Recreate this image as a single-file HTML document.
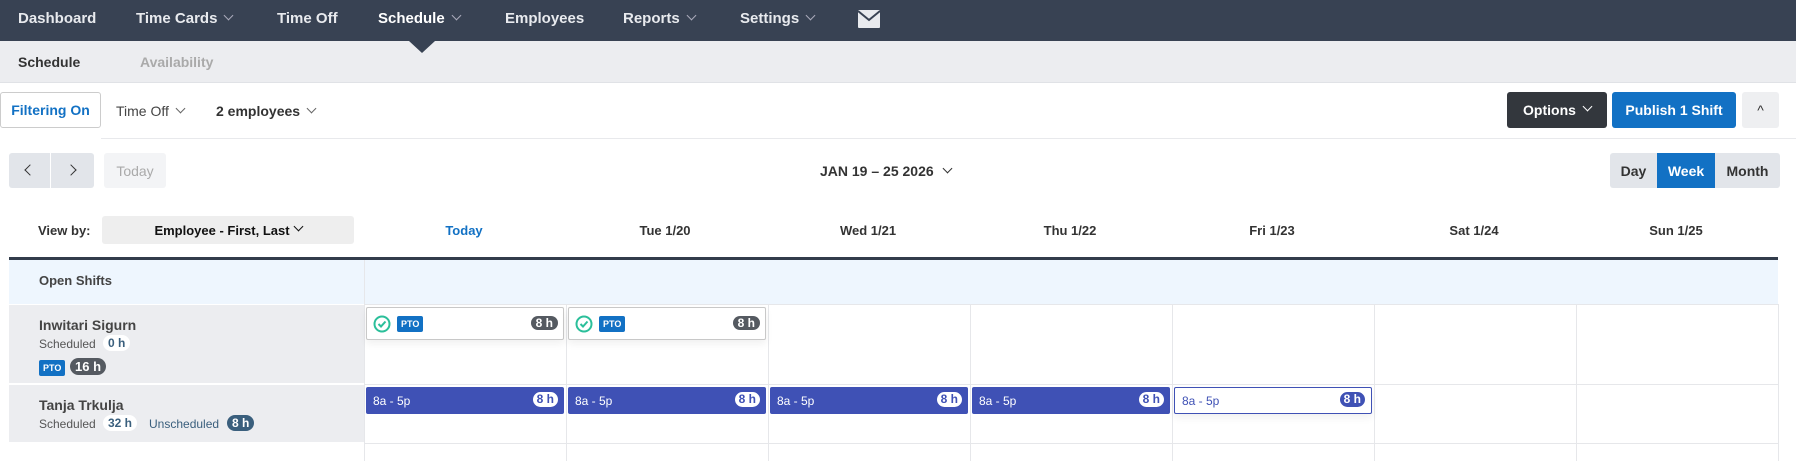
<!DOCTYPE html>
<html><head><meta charset="utf-8"><style>
*{box-sizing:border-box;margin:0;padding:0}
body{width:1796px;height:461px;overflow:hidden;background:#fff;font-family:"Liberation Sans",sans-serif;color:#333;position:relative}
.a{position:absolute}
.nav{left:0;top:0;width:1796px;height:41px;background:#384253}
.nav span{position:absolute;top:10px;color:#e8eaee;font-size:15px;font-weight:bold}
.chev{display:inline-block;width:7px;height:7px;border-right:1px solid currentColor;border-bottom:1px solid currentColor;transform:rotate(45deg);margin-left:8px;position:relative;top:-4px}
.sub{left:0;top:41px;width:1796px;height:42px;background:#ecedf0;border-bottom:1px solid #e0e2e6}
.btn{position:absolute;display:flex;align-items:center;justify-content:center;font-size:14px;font-weight:bold;border-radius:3px}
.hdr{position:absolute;top:223px;font-size:13px;font-weight:bold;color:#333;transform:translateX(-50%)}
.vl{position:absolute;width:1px;background:#e6e7ea}
.hl{position:absolute;height:1px;background:#e6e7ea}
.pto{position:absolute;top:307px;width:198px;height:33px;background:#fff;border:1px solid #c8c8c8;border-radius:2px;box-shadow:0 4px 8px rgba(0,0,0,.06)}
.tag{position:absolute;background:#1271c4;color:#fff;font-size:9px;font-weight:bold;border-radius:2px;padding:3px 4px}
.pill{position:absolute;border-radius:9px;font-size:12px;font-weight:bold;padding:1px 5px}
.shift{position:absolute;top:387px;width:198px;height:27px;background:#3f51b5;color:#fff;font-size:12px;border-radius:2px}
.shift .t{position:absolute;left:7px;top:7px}
.shift .p{position:absolute;right:6px;top:5px;background:#fff;color:#3f51b5;border-radius:8px;font-size:12px;font-weight:bold;padding:0 4px;line-height:15px}
</style></head><body>
<div class="a nav">
<span style="left:18px">Dashboard</span>
<span style="left:136px">Time Cards<i class="chev" style="color:#aab"></i></span>
<span style="left:277px">Time Off</span>
<span style="left:378px;color:#fff">Schedule<i class="chev" style="color:#aab"></i></span>
<span style="left:505px">Employees</span>
<span style="left:623px">Reports<i class="chev" style="color:#aab"></i></span>
<span style="left:740px">Settings<i class="chev" style="color:#aab"></i></span>
<svg class="a" style="left:858px;top:10px" width="22" height="18" viewBox="0 0 22 18"><rect x="0" y="0" width="22" height="18" rx="1" fill="#e8eaee"/><path d="M0 1 L11 10 L22 1" stroke="#384253" stroke-width="2" fill="none"/></svg>
</div>
<div class="a" style="left:409px;top:41px;width:0;height:0;border-left:13px solid transparent;border-right:13px solid transparent;border-top:12px solid #384253;z-index:3"></div>
<div class="a sub">
<span class="a" style="left:18px;top:13px;font-size:14px;font-weight:bold;color:#333">Schedule</span>
<span class="a" style="left:140px;top:13px;font-size:14px;font-weight:bold;color:#aaa">Availability</span>
</div>
<div class="btn" style="left:0;top:92px;width:101px;height:36px;border:1px solid #ccc;color:#1271c4;background:#fff">Filtering On</div>
<span class="a" style="left:116px;top:103px;font-size:14px;color:#444">Time Off<i class="chev" style="color:#666"></i></span>
<span class="a" style="left:216px;top:103px;font-size:14px;color:#333;font-weight:bold">2 employees<i class="chev" style="color:#666"></i></span>
<div class="btn" style="left:1507px;top:92px;width:100px;height:36px;background:#33373d;color:#fff">Options<i class="chev" style="color:#fff;margin-left:8px"></i></div>
<div class="btn" style="left:1612px;top:92px;width:124px;height:36px;background:#1271c4;color:#fff">Publish 1 Shift</div>
<div class="btn" style="left:1742px;top:92px;width:37px;height:36px;background:#eeeff1;color:#333;font-weight:normal">^</div>
<div class="hl" style="left:101px;top:138px;width:1695px;background:#e8e9ec"></div>
<div class="btn" style="left:9px;top:153px;width:85px;height:35px;background:#e2e5ea"></div>
<div class="a" style="left:50px;top:153px;width:1px;height:35px;background:#fff"></div>
<div class="a" style="left:26px;top:166px;width:8px;height:8px;border-left:1.5px solid #333;border-bottom:1.5px solid #333;transform:rotate(45deg)"></div>
<div class="a" style="left:67px;top:166px;width:8px;height:8px;border-right:1.5px solid #333;border-top:1.5px solid #333;transform:rotate(45deg)"></div>
<div class="btn" style="left:104px;top:153px;width:62px;height:35px;background:#f3f4f6;color:#aaa;font-weight:normal">Today</div>
<span class="a" style="left:820px;top:163px;font-size:14px;font-weight:bold;color:#333">JAN 19 – 25 2026<i class="chev" style="color:#333;margin-left:10px"></i></span>
<div class="btn" style="left:1610px;top:153px;width:170px;height:35px;background:#e2e5ea"></div>
<div class="btn" style="left:1610px;top:153px;width:47px;height:35px;color:#333">Day</div>
<div class="btn" style="left:1657px;top:153px;width:58px;height:35px;background:#1271c4;color:#fff;border-radius:0">Week</div>
<div class="btn" style="left:1715px;top:153px;width:65px;height:35px;color:#333">Month</div>
<span class="a" style="left:38px;top:223px;font-size:13px;font-weight:bold;color:#333">View by:</span>
<div class="btn" style="left:102px;top:216px;width:252px;height:28px;background:#eeeeee;font-size:13px;color:#111">Employee - First, Last<i class="chev" style="color:#111;margin-left:5px"></i></div>
<span class="hdr" style="left:464px;color:#1271c4">Today</span>
<span class="hdr" style="left:665px">Tue 1/20</span>
<span class="hdr" style="left:868px">Wed 1/21</span>
<span class="hdr" style="left:1070px">Thu 1/22</span>
<span class="hdr" style="left:1272px">Fri 1/23</span>
<span class="hdr" style="left:1474px">Sat 1/24</span>
<span class="hdr" style="left:1676px">Sun 1/25</span>
<div class="a" style="left:9px;top:257px;width:1769px;height:3px;background:#323c4b"></div>
<div class="a" style="left:9px;top:260px;width:1769px;height:44px;background:#eef6fe"></div>
<span class="a" style="left:39px;top:273px;font-size:13px;font-weight:bold;color:#444">Open Shifts</span>
<div class="a" style="left:9px;top:305px;width:355px;height:78px;background:#ecedf0"></div>
<div class="a" style="left:9px;top:385px;width:355px;height:57px;background:#ecedf0"></div>
<div class="hl" style="left:364px;top:304px;width:1414px"></div>
<div class="hl" style="left:364px;top:384px;width:1414px"></div>
<div class="hl" style="left:364px;top:443px;width:1414px"></div>
<div class="vl" style="left:364px;top:260px;height:201px"></div>
<div class="vl" style="left:566px;top:304px;height:157px"></div>
<div class="vl" style="left:768px;top:304px;height:157px"></div>
<div class="vl" style="left:970px;top:304px;height:157px"></div>
<div class="vl" style="left:1172px;top:304px;height:157px"></div>
<div class="vl" style="left:1374px;top:304px;height:157px"></div>
<div class="vl" style="left:1576px;top:304px;height:157px"></div>
<div class="vl" style="left:1778px;top:304px;height:157px"></div>
<span class="a" style="left:39px;top:317px;font-size:14px;font-weight:bold;color:#444">Inwitari Sigurn</span>
<span class="a" style="left:39px;top:337px;font-size:12px;color:#555">Scheduled</span>
<span class="pill" style="left:103px;top:335px;background:#fff;color:#3a5f7d">0 h</span>
<span class="tag" style="left:39px;top:360px">PTO</span>
<span class="pill" style="left:70px;top:358px;background:#555a61;color:#fff;font-size:13px">16 h</span>
<span class="a" style="left:39px;top:397px;font-size:14px;font-weight:bold;color:#444">Tanja Trkulja</span>
<span class="a" style="left:39px;top:417px;font-size:12px;color:#555">Scheduled</span>
<span class="pill" style="left:103px;top:415px;background:#fff;color:#3a5f7d">32 h</span>
<span class="a" style="left:149px;top:417px;font-size:12px;color:#3a5f7d">Unscheduled</span>
<span class="pill" style="left:227px;top:415px;background:#3a5f7d;color:#fff">8 h</span>
<div class="pto" style="left:366px"><svg class="a" style="left:6px;top:7px" width="18" height="18" viewBox="0 0 18 18"><circle cx="9" cy="9" r="7.5" fill="none" stroke="#2bbf9a" stroke-width="2"/><path d="M5.5 9 L8 11.5 L12.5 6.5" fill="none" stroke="#2bbf9a" stroke-width="2"/></svg><span class="tag" style="left:30px;top:8px">PTO</span><span class="pill" style="right:5px;top:8px;background:#555a61;color:#fff;padding:0 5px">8 h</span></div>
<div class="pto" style="left:568px"><svg class="a" style="left:6px;top:7px" width="18" height="18" viewBox="0 0 18 18"><circle cx="9" cy="9" r="7.5" fill="none" stroke="#2bbf9a" stroke-width="2"/><path d="M5.5 9 L8 11.5 L12.5 6.5" fill="none" stroke="#2bbf9a" stroke-width="2"/></svg><span class="tag" style="left:30px;top:8px">PTO</span><span class="pill" style="right:5px;top:8px;background:#555a61;color:#fff;padding:0 5px">8 h</span></div>
<div class="shift" style="left:366px"><span class="t">8a - 5p</span><span class="p">8 h</span></div>
<div class="shift" style="left:568px"><span class="t">8a - 5p</span><span class="p">8 h</span></div>
<div class="shift" style="left:770px"><span class="t">8a - 5p</span><span class="p">8 h</span></div>
<div class="shift" style="left:972px"><span class="t">8a - 5p</span><span class="p">8 h</span></div>
<div class="shift" style="left:1174px;background:#fff;border:1px solid #3f51b5;color:#3f51b5;box-shadow:0 4px 8px rgba(0,0,0,.06)"><span class="t" style="top:6px">8a - 5p</span><span class="p" style="background:#3f51b5;color:#fff;top:4px">8 h</span></div>
</body></html>
